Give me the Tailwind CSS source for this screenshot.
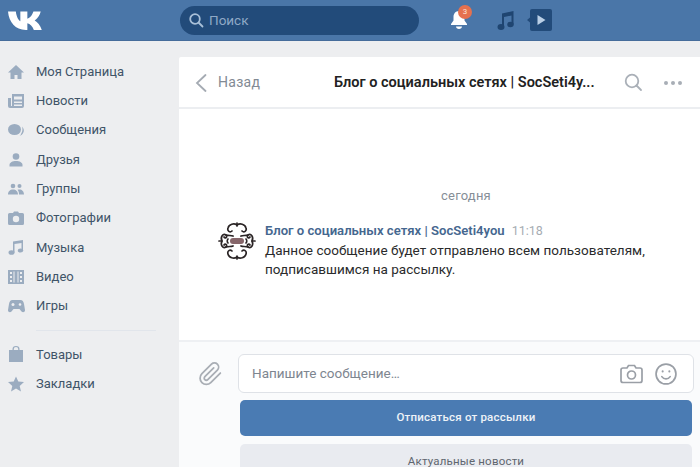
<!DOCTYPE html>
<html><head><meta charset="utf-8">
<script src="https://cdn.jsdelivr.net/npm/@tailwindcss/browser@4"></script>
</head>
<body class="w-[700px] h-[467px] overflow-hidden bg-[#edeef0] font-['Roboto','Liberation_Sans',sans-serif]">
<header class="h-[41px] bg-[#4a76a8] border-b border-[#456c9b] flex items-center">
  <div class="w-[180px] flex items-center pl-[8px]">
    <svg width="34" height="21" viewBox="0 0 32.500 20"><path d="M0 1.500h7.500c.6 5 2.400 8.300 4.300 9.300V1.500h6.700v6.800c2.600-.4 4.600-3.500 5.800-6.800h7c-1 4-3.500 7-5.800 8.400 2.600 1.400 5.400 4.500 6.800 9.100h-7.600c-1.100-3.500-3.700-6-6.200-6.400V19h-1.500C7 19 1 12 0 1.500z" fill="#fff"/></svg>
  </div>
  <div class="w-[239px] h-[29px] rounded-full bg-[#224b7a] flex items-center pl-[8px] gap-[5px]">
    <svg width="16" height="16" viewBox="0 0 16 16" fill="none" stroke="#a9c0d8" stroke-width="1.800"><circle cx="7" cy="7" r="4.800"/><path d="M10.500 10.500 14.500 14.500" stroke-linecap="round"/></svg>
    <span class="text-[13.500px] text-[#8fa9c6]">Поиск</span>
  </div>
  <div class="relative ml-[30px] w-[20px] h-[24px]">
    <svg class="absolute left-0 top-[2px]" width="20" height="20" viewBox="0 0 20 20" fill="#fff"><path d="M10 1c-3.500 0-5.500 2.800-5.500 6v3.500L2 14v1h16v-1l-2.500-3.500V7C15.500 3.800 13.500 1 10 1z"/><path d="M7 16.500h6c0 1.300-1.300 2.500-3 2.500s-3-1.200-3-2.500z"/></svg>
    <span class="absolute left-[9px] top-[-3px] w-[14px] h-[14px] rounded-full bg-[#e5714f] text-[8px] leading-[14px] text-center text-[#fde3d6]">3</span>
  </div>
  <svg class="ml-[28px]" width="18" height="22" viewBox="0 0 18 22" fill="#1f4571"><path d="M5 4.500 16.500 2v13.500h-2V6.500L7 8v10h-2z"/><ellipse cx="4" cy="18" rx="3.500" ry="3"/><ellipse cx="13.500" cy="15.500" rx="3.200" ry="2.800"/></svg>
  <svg class="ml-[12px]" width="25" height="22" viewBox="0 0 25 22"><path d="M5 0h18a2 2 0 0 1 2 2v18a2 2 0 0 1-2 2H5a2 2 0 0 1-2-2v-6.500L0 11l3-2.500V2a2 2 0 0 1 2-2z" fill="#224b7a"/><path d="M10.500 6v10l8-5z" fill="#b9cfe6"/></svg>
</header>

<div class="flex h-[426px]">
  <nav class="w-[179px] shrink-0 pt-[16px] text-[13px] text-[#3f5468]">
    <ul>
      <li class="h-[29.300px] flex items-center"><span class="w-[36px] pl-[8px]"><svg width="16" height="16" viewBox="0 0 16 16" fill="#9bacc0"><path d="M8 1 0 8.500h2.500V15h4v-4h3v4h4V8.500H16z"/></svg></span>Моя Страница</li>
      <li class="h-[29.300px] flex items-center"><span class="w-[36px] pl-[8px]"><svg width="16" height="16" viewBox="0 0 16 16" fill="#9bacc0"><path d="M4 1h12v12a2 2 0 0 1-2 2H2a2 2 0 0 1-2-2V5h3v8h1z"/><path d="M6 3.500h8v3H6zM6 8.500h8V10H6zM6 11.500h8V13H6z" fill="#edeef0"/></svg></span>Новости</li>
      <li class="h-[29.300px] flex items-center"><span class="w-[36px] pl-[8px]"><svg width="16" height="16" viewBox="0 0 16 16" fill="#9bacc0"><ellipse cx="6.500" cy="7.500" rx="6.500" ry="5.500"/><path d="M14 4.500c2.500 2.500 2.500 6-.5 8.500l-2 1c1-.8 1.500-1.500 1.700-2.500 1.500-2 1.500-5 .8-7z"/></svg></span>Сообщения</li>
      <li class="h-[29.300px] flex items-center"><span class="w-[36px] pl-[8px]"><svg width="16" height="16" viewBox="0 0 16 16" fill="#9bacc0"><circle cx="8" cy="4.500" r="3.300"/><path d="M1.500 14.500V13c0-2.500 3-4 6.500-4s6.500 1.500 6.500 4v1.500z"/></svg></span>Друзья</li>
      <li class="h-[29.300px] flex items-center"><span class="w-[36px] pl-[8px]"><svg width="16" height="16" viewBox="0 0 16 16" fill="#9bacc0"><circle cx="5" cy="5" r="2.300"/><circle cx="11.500" cy="5" r="2"/><path d="M0 13.500c0-3 2-5 5-5s5 2 5 5zM11 13.500c0-2-.5-3.500-1.500-4.700.6-.3 1.300-.4 2-.4 2.500 0 4.500 2 4.500 5.100z"/></svg></span>Группы</li>
      <li class="h-[29.300px] flex items-center"><span class="w-[36px] pl-[8px]"><svg width="16" height="16" viewBox="0 0 16 16" fill="#9bacc0"><path d="M1.500 3H5l1-1.500h4L11 3h3.500A1.500 1.500 0 0 1 16 4.500v9a1.500 1.500 0 0 1-1.500 1.500h-13A1.500 1.500 0 0 1 0 13.500v-9A1.500 1.500 0 0 1 1.500 3z"/><circle cx="8" cy="9" r="3.200" fill="#edeef0"/></svg></span>Фотографии</li>
      <li class="h-[29.300px] flex items-center"><span class="w-[36px] pl-[8px]"><svg width="16" height="16" viewBox="0 0 16 16" fill="#9bacc0"><path d="M5 2.500 15 1v10.500h-1.500V4L6.500 5v8.500H5z"/><ellipse cx="3.500" cy="13.500" rx="3" ry="2.300"/><ellipse cx="12.500" cy="11.500" rx="2.700" ry="2.100"/></svg></span>Музыка</li>
      <li class="h-[29.300px] flex items-center"><span class="w-[36px] pl-[8px]"><svg width="16" height="16" viewBox="0 0 16 16" fill="#9bacc0"><path d="M0 1h16v14H0z"/><path d="M2 3h2v2H2zM2 7h2v2H2zM2 11h2v2H2zM12 3h2v2h-2zM12 7h2v2h-2zM12 11h2v2h-2zM5.500 2.500h1v11h-1zM9.500 2.500h1v11h-1z" fill="#edeef0"/></svg></span>Видео</li>
      <li class="h-[29.300px] flex items-center"><span class="w-[36px] pl-[8px]"><svg width="17" height="14" viewBox="0 0 17 14" fill="#9bacc0"><path d="M4.500 1h8c2 0 3 1.500 3.500 4l1 6c.2 2-2 3-3.500 1.500L11.500 10h-6l-2 2.500C2 14 -.2 13 0 11l1-6c.5-2.500 1.500-4 3.500-4z"/><circle cx="5" cy="5.500" r="1.500" fill="#edeef0"/><circle cx="12" cy="5.500" r="1.300" fill="#edeef0"/></svg></span>Игры</li>
    </ul>
    <div class="ml-[36px] w-[120px] h-px bg-[#e1e5eb] my-[9px]"></div>
    <ul>
      <li class="h-[29.300px] flex items-center"><span class="w-[36px] pl-[9px]"><svg width="14" height="16" viewBox="0 0 14 16" fill="#9bacc0"><path d="M0 4h3.500V3a3.500 3 0 0 1 7 0v1H14v12H0zM4.800 4h4.400V3a2.200 2 0 0 0-4.400 0z"/></svg></span>Товары</li>
      <li class="h-[29.300px] flex items-center"><span class="w-[36px] pl-[8px]"><svg width="16" height="16" viewBox="0 0 16 16" fill="#9bacc0"><path d="m8 .5 2.300 5 5.700.6-4.300 3.800 1.300 5.600L8 12.600 3 15.500l1.300-5.600L0 6.100l5.700-.6z"/></svg></span>Закладки</li>
    </ul>
  </nav>

  <main class="flex-1 mt-[16px] bg-white flex flex-col min-w-0 rounded-tl-[2px] overflow-hidden">
    <div class="h-[52px] shrink-0 border-b-2 border-[#eceef1] flex items-center pt-[1px]">
      <svg class="ml-[16px]" width="12" height="18" viewBox="0 0 12 18" fill="none" stroke="#a5abb3" stroke-width="1.800"><path d="M10.500 1 2 9l8.500 8" stroke-linecap="round"/></svg>
      <span class="ml-[11px] w-[116px] text-[14px] text-[#828a94] tracking-[0.3px]">Назад</span>
      <span class="w-[261px] text-[14.500px] font-semibold text-[#222] whitespace-nowrap">Блог о социальных сетях | SocSeti4y...</span>
      <svg class="ml-[29px]" width="19" height="19" viewBox="0 0 19 19" fill="none" stroke="#aab0b8" stroke-width="1.800"><circle cx="8" cy="8" r="6.300"/><path d="M12.500 12.500 17 17" stroke-linecap="round"/></svg>
      <span class="ml-[21px] flex gap-[3px]"><i class="size-[4px] rounded-full bg-[#a8aeb6]"></i><i class="size-[4px] rounded-full bg-[#a8aeb6]"></i><i class="size-[4px] rounded-full bg-[#a8aeb6]"></i></span>
    </div>

    <div class="flex-1 min-h-0 flex flex-col">
      <p class="mt-[77px] pl-[53px] text-center text-[13px] text-[#868e97] tracking-[0.2px]">сегодня</p>
      <div class="flex mt-[18px] ml-[39px]">
        <svg class="shrink-0 mt-[-2px]" width="38" height="38" viewBox="0 0 38 38" fill="none" stroke="#2b2526" stroke-width="1.700" stroke-linecap="round">
          <path d="M4 19c-2-4 1-8 4-6 2 2-1 4-2 2M34 19c2-4-1-8-4-6-2 2 1 4 2 2M4 19c-2 4 1 8 4 6 2-2-1-4-2-2M34 19c2 4-1 8-4 6-2-2 1-4 2-2"/>
          <path d="M19 3c-3-2-8-1-9 3-1 3 2 5 4 3M19 3c3-2 8-1 9 3 1 3-2 5-4 3M19 35c-3 2-8 1-9-3-1-3 2-5 4-3M19 35c3 2 8 1 9-3 1-3-2-5-4-3"/>
          <path d="M8 13c3 1 5 0 7 1M30 13c-3 1-5 0-7 1M8 25c3-1 5 0 7-1M30 25c-3-1-5 0-7-1M1 19h3M34 19h3M19 1v3M19 34v3"/>
          <path d="M10 17c-1 1-1 3 0 4M28 17c1 1 1 3 0 4"/>
          <rect x="12" y="16" width="14" height="6" rx="3" fill="#86666a" stroke="none"/>
        </svg>
        <div class="ml-[9px] mt-[-2px]">
          <div class="flex items-baseline text-[13.100px] leading-[18px]"><span class="font-semibold text-[#45678f]">Блог о социальных сетях | SocSeti4you</span><span class="ml-[7px] text-[12.500px] text-[#a6acb3]">11:18</span></div>
          <p class="text-[13.500px] leading-[19px] text-[#2a2b2c] mt-[1px] tracking-[0.02px]">Данное сообщение будет отправлено всем пользователям,<br>подписавшимся на рассылку.</p>
        </div>
      </div>
    </div>

    <div class="h-[127px] shrink-0 bg-[#fafbfc] border-t-2 border-[#eef0f3] flex overflow-hidden">
      <div class="w-[59px] shrink-0 pl-[19px] pt-[19px]">
        <svg width="25" height="26" viewBox="0 0 24 24" fill="none" stroke="#a9aeb5" stroke-width="1.700" stroke-linecap="round" stroke-linejoin="round"><path d="M21.440 11.050l-9.190 9.190a6 6 0 0 1-8.490-8.490l9.190-9.190a4 4 0 0 1 5.660 5.660l-9.200 9.190a2 2 0 0 1-2.830-2.830l8.490-8.480"/></svg>
      </div>
      <div class="flex flex-col">
        <div class="w-[456px] h-[39px] shrink-0 mt-[12px] rounded-[6px] bg-white border border-[#dfe2e7] flex items-center pl-[13px] pr-[16px]">
          <span class="flex-1 text-[13.500px] text-[#7e8690]">Напишите сообщение…</span>
          <svg width="23" height="20" viewBox="0 0 23 20" fill="none" stroke="#9a9fa6" stroke-width="1.700"><path d="M3 4h4l1.500-2.500h6L16 4h4a2 2 0 0 1 2 2v10.500a2 2 0 0 1-2 2H3a2 2 0 0 1-2-2V6a2 2 0 0 1 2-2z"/><circle cx="11.500" cy="11" r="4"/></svg>
          <svg class="ml-[12px]" width="22" height="22" viewBox="0 0 21 21" fill="none" stroke="#9a9fa6" stroke-width="1.600"><circle cx="10.500" cy="10.500" r="9.500"/><circle cx="7.300" cy="8" r="1" fill="#9a9fa6" stroke="none"/><circle cx="13.700" cy="8" r="1" fill="#9a9fa6" stroke="none"/><path d="M6.500 13c1 1.500 2.500 2.200 4 2.200s3-.7 4-2.200" stroke-linecap="round"/></svg>
        </div>
        <button class="w-[452px] h-[36px] shrink-0 ml-[2px] mt-[7px] rounded-[5px] bg-[#4a7bb3] text-[#eef3f8] text-[11.500px] font-medium tracking-[0.2px]">Отписаться от рассылки</button>
        <button class="w-[452px] h-[36px] shrink-0 ml-[2px] mt-[8px] rounded-[5px] bg-[#e9ebf0] text-[#5f666f] text-[11.500px] tracking-[0.2px]">Актуальные новости</button>
      </div>
    </div>
  </main>
</div>
</body></html>
